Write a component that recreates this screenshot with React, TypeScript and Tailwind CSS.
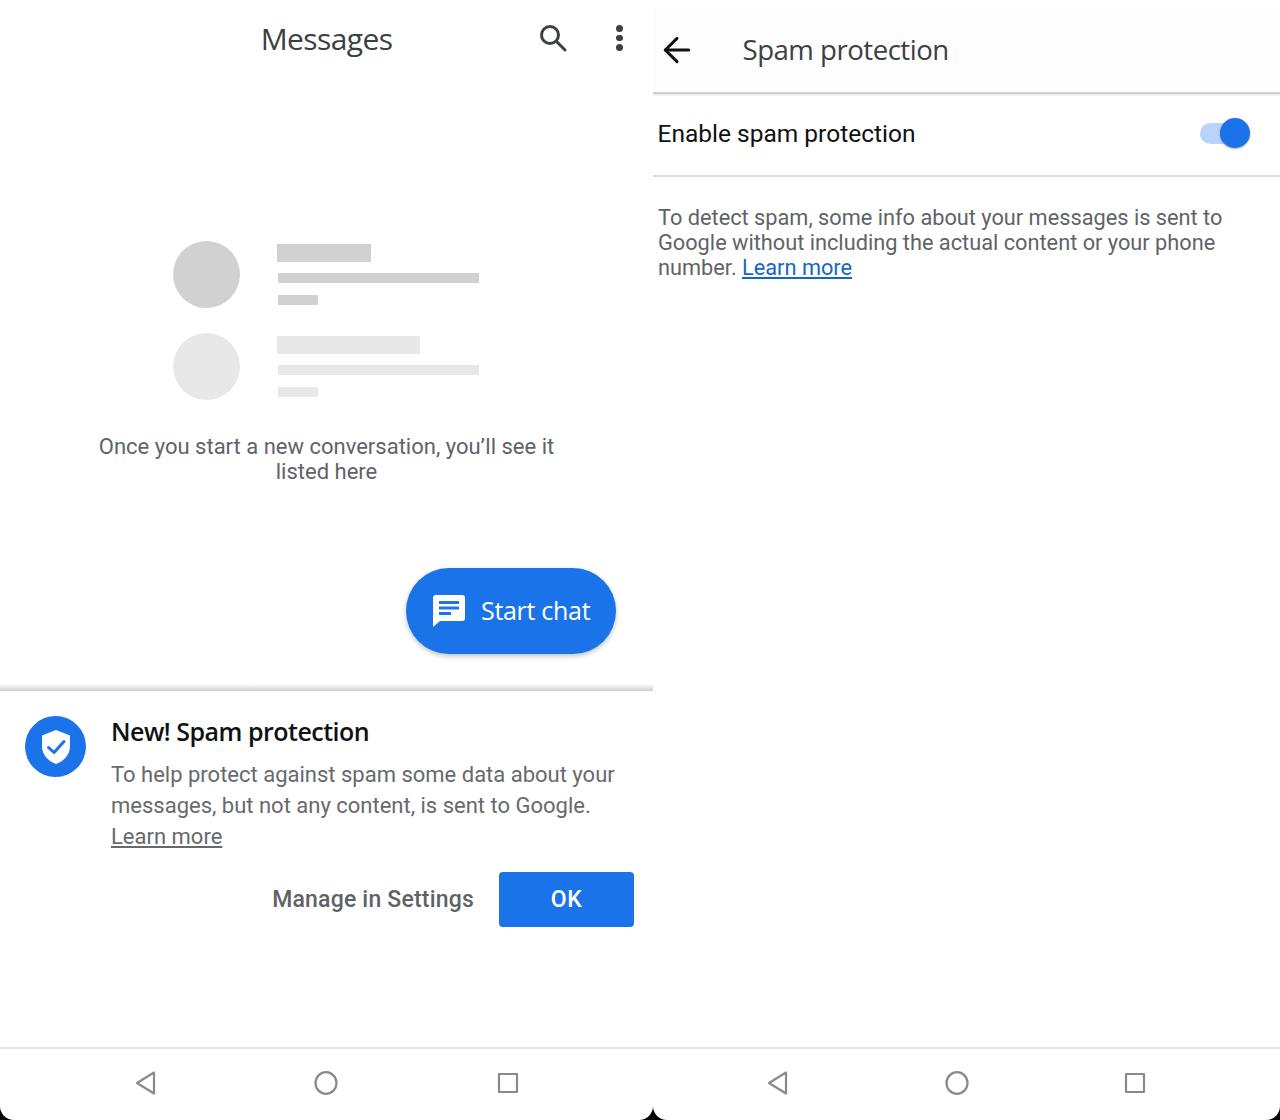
import React from 'react';
import { ArrowLeft } from 'lucide-react';

const titleFont = "font-['Open_Sans',sans-serif]";

const NavBar: React.FC<{ positions: string; squareClass: string }> = ({ positions, squareClass }) => (
  <div className={`h-[73px] shrink-0 border-t-2 border-[#e4e4e4] pb-[4px] flex items-center ${positions}`}>
    <svg width="24" height="26" viewBox="0 0 24 26" fill="none" stroke="#8a8a8a" strokeWidth="2.2" strokeLinejoin="round">
      <path d="M20 2.5 L3 13 L20 23.5 Z" />
    </svg>
    <svg width="26" height="26" viewBox="0 0 26 26" fill="none" stroke="#8a8a8a" strokeWidth="2.2">
      <ellipse cx="13" cy="13" rx="10.5" ry="10.8" />
    </svg>
    <svg className={squareClass} width="22" height="22" viewBox="0 0 22 22" fill="none" stroke="#8a8a8a" strokeWidth="2.2" strokeLinejoin="round">
      <rect x="2" y="2" width="18" height="18" />
    </svg>
  </div>
);

const Placeholder: React.FC<{ tone: string; titleWidth: string }> = ({ tone, titleWidth }) => (
  <div className="flex gap-[37px]">
    <div className={`w-[67px] h-[67px] rounded-full ${tone}`} />
    <div className="flex flex-col pt-[3px]">
      <div className={`h-[18px] ${titleWidth} ${tone}`} />
      <div className={`h-[10px] w-[201px] mt-[11px] ml-px ${tone}`} />
      <div className={`h-[10px] w-[40px] mt-[12px] ml-px ${tone}`} />
    </div>
  </div>
);

const MessagesPane = () => (
  <div className="w-[653px] shrink-0 h-full bg-white rounded-b-[14px] flex flex-col overflow-hidden">
    <div className="h-[76px] shrink-0 grid grid-cols-[1fr_auto_1fr] items-center">
      <div />
      <h1 className={`${titleFont} text-[30px] tracking-[-0.6px] text-[#3c4043]`}>Messages</h1>
      <div className="flex items-center pl-[146px] gap-[48px]">
        <svg width="30" height="30" viewBox="0 0 30 30" fill="none" stroke="#3c4043" strokeWidth="3" strokeLinecap="round">
          <circle cx="12" cy="12" r="8.5" />
          <path d="M18.5 18.5 L27 27" />
        </svg>
        <div className="flex flex-col gap-[3px]">
          <span className="w-[6.5px] h-[6.5px] rounded-full bg-[#3c4043]" />
          <span className="w-[6.5px] h-[6.5px] rounded-full bg-[#3c4043]" />
          <span className="w-[6.5px] h-[6.5px] rounded-full bg-[#3c4043]" />
        </div>
      </div>
    </div>

    <div className="h-[608px] shrink-0 flex flex-col">
      <div className="pl-[173px] pt-[165px] flex flex-col gap-[24.5px]">
        <Placeholder tone="bg-[#d1d1d1]" titleWidth="w-[94px]" />
        <Placeholder tone="bg-[#e8e8e8]" titleWidth="w-[143px]" />
      </div>
      <p className="mt-[34px] text-center font-['Roboto',sans-serif] text-[22px] leading-[25px] text-[#5f6368]">
        Once you start a new conversation, you’ll see it
        <br />
        listed here
      </p>
      <div className="flex justify-end pr-[37px] mt-[84px]">
        <button className="w-[210px] h-[86px] rounded-full bg-[#1a73e8] shadow-[0_2px_5px_rgba(0,0,0,0.25)] flex items-center pl-[27px] gap-[16px] text-white">
          <svg width="32" height="32" viewBox="0 0 32 32" fill="#fff">
            <path fillRule="evenodd" d="M3 0 H29 A3 3 0 0 1 32 3 V23 A3 3 0 0 1 29 26 H7 L0 32 V3 A3 3 0 0 1 3 0 Z M6 6 V9 H26 V6 Z M6 11.5 V14.5 H26 V11.5 Z M6 17 V20 H18 V17 Z" />
          </svg>
          <span className={`${titleFont} text-[25px] tracking-[-0.3px]`}>Start chat</span>
        </button>
      </div>
    </div>

    <div className="h-[7px] shrink-0 bg-gradient-to-b from-white to-[#cfcfcf]" />

    <div className="flex-1 flex flex-col">
      <div className="flex-1 pl-[25px] pt-[25px]">
        <div className="flex gap-[25px]">
          <div className="w-[61px] h-[61px] shrink-0 rounded-full bg-[#1a73e8] flex items-center justify-center">
            <svg width="30" height="36" viewBox="0 0 30 36" fill="none">
              <path d="M15 1 L29 6.5 V17 C29 26 23 32 15 35 C7 32 1 26 1 17 V6.5 Z" fill="#fff" />
              <path d="M7.5 18.5 L13 23.5 L23 12.5" stroke="#1a73e8" strokeWidth="3" strokeLinecap="round" strokeLinejoin="round" />
            </svg>
          </div>
          <div className="font-['Roboto',sans-serif] -mt-[1px]">
            <h2 className={`${titleFont} text-[25px] leading-[32px] font-semibold tracking-[-0.5px] text-[#111]`}>New! Spam protection</h2>
            <p className="mt-[12px] text-[22px] leading-[31px] text-[#67696c] w-[520px]">
              To help protect against spam some data about your messages, but not any content, is sent to Google.
              <br />
              <a className="underline underline-offset-2">Learn more</a>
            </p>
          </div>
        </div>
        <div className="flex justify-end items-center pr-[19px] mt-[20px] gap-[25px]">
          <span className="pt-px font-['Roboto',sans-serif] text-[23px] font-medium tracking-[0.2px] text-[#5f6368]">Manage in Settings</span>
          <button className="w-[135px] h-[55px] pt-px rounded-[4px] bg-[#1a73e8] text-white font-['Roboto',sans-serif] text-[23px] font-medium tracking-[0.6px]">OK</button>
        </div>
      </div>
      <NavBar positions="pl-[134px] gap-[155px]" squareClass="ml-[3px]" />
    </div>
  </div>
);

const SettingsPane = () => (
  <div className="flex-1 h-full bg-white rounded-b-[14px] flex flex-col overflow-hidden">
    <div className="h-[8px] shrink-0 bg-white" />
    <div className="h-[86px] shrink-0 bg-[#fdfdfd] border-b-2 border-[#cdcdcd] shadow-[0_1px_2px_rgba(0,0,0,0.12)] flex items-center pl-[3.5px] gap-[46px]">
      <ArrowLeft size={40} strokeWidth={3} color="#111" absoluteStrokeWidth />
      <h1 className={`${titleFont} text-[27.6px] tracking-[-0.5px] text-[#3c4043]`}>Spam protection</h1>
    </div>
    <div className="h-[83px] shrink-0 border-b-2 border-[#dedede] flex items-center justify-between pl-[4.5px] pr-[30px]">
      <span className="font-['Roboto',sans-serif] text-[24.5px] text-[#111]">Enable spam protection</span>
      <div className="relative w-[50px] h-[30px] -mt-[3px]">
        <div className="absolute left-0 top-[5px] w-[40px] h-[21px] rounded-full bg-[#b9d4f8]" />
        <div className="absolute right-0 top-0 w-[30px] h-[30px] rounded-full bg-[#1a73e8] shadow-[0_1px_2px_rgba(0,0,0,0.35)]" />
      </div>
    </div>
    <p className="pl-[5px] pr-[40px] pt-[28px] font-['Roboto',sans-serif] text-[21.75px] leading-[25px] text-[#5f6368]">
      To detect spam, some info about your messages is sent to Google without including the actual content or your phone number.{' '}
      <a className="text-[#1565d0] underline">Learn more</a>
    </p>
    <div className="flex-1" />
    <NavBar positions="pl-[113px] gap-[154px]" squareClass="" />
  </div>
);

export default function App() {
  return (
    <div className="w-[1280px] h-[1120px] flex bg-black overflow-hidden">
      <MessagesPane />
      <SettingsPane />
    </div>
  );
}
